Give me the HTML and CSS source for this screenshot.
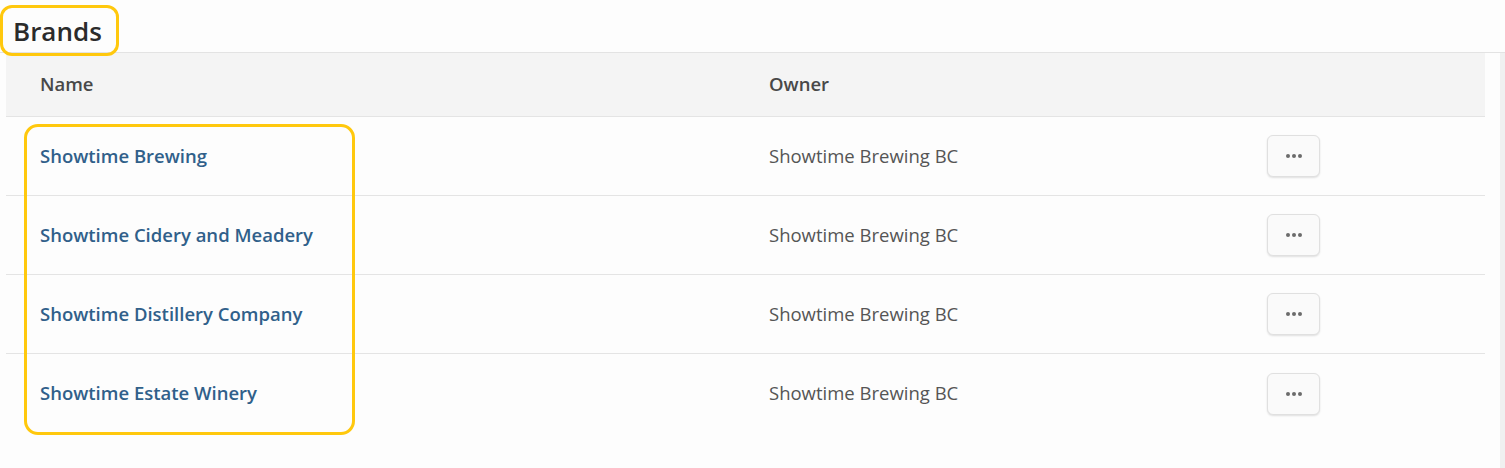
FILE: index.html
```html
<!DOCTYPE html>
<html>
<head>
<meta charset="utf-8">
<link rel="stylesheet" href="styles.css">
</head>
<body>
<div class="page">
  <header class="title-bar">
    <h1 class="title">Brands</h1>
    <span class="mark mark-title"></span>
  </header>
  <div class="content">
    <main class="main">
      <div class="table">
        <div class="row head">
          <div class="cell">Name</div>
          <div class="cell">Owner</div>
          <div class="cell"></div>
        </div>
        <div class="row">
          <div class="cell"><a class="name" href="#">Showtime Brewing</a></div>
          <div class="cell owner">Showtime Brewing BC</div>
          <div class="cell action"><button class="more"><span></span><span></span><span></span></button></div>
        </div>
        <div class="row">
          <div class="cell"><a class="name" href="#">Showtime Cidery and Meadery</a></div>
          <div class="cell owner">Showtime Brewing BC</div>
          <div class="cell action"><button class="more"><span></span><span></span><span></span></button></div>
        </div>
        <div class="row">
          <div class="cell"><a class="name" href="#">Showtime Distillery Company</a></div>
          <div class="cell owner">Showtime Brewing BC</div>
          <div class="cell action"><button class="more"><span></span><span></span><span></span></button></div>
        </div>
        <div class="row last">
          <div class="cell"><a class="name" href="#">Showtime Estate Winery</a></div>
          <div class="cell owner">Showtime Brewing BC</div>
          <div class="cell action"><button class="more"><span></span><span></span><span></span></button></div>
        </div>
        <span class="mark mark-names"></span>
      </div>
    </main>
    <div class="scrollbar"></div>
  </div>
</div>
</body>
</html>
```
FILE: styles.css
```css
* { box-sizing: border-box; }
html, body { margin: 0; height: 100%; }
body {
  background: #fdfdfd;
  font-family: "Open Sans", "Noto Sans", sans-serif;
  color: #444;
}
.page { height: 100%; display: flex; flex-direction: column; }
.title-bar {
  position: relative;
  height: 52px;
  padding-left: 13px;
  display: flex;
  align-items: flex-end;
}
.title {
  margin: 0 0 4px;
  font-size: 26px;
  font-weight: 600;
  color: #2b2b2b;
  line-height: 34px;
}
.mark {
  position: absolute;
  border: 3px solid #ffc80d;
  pointer-events: none;
}
.mark-title { left: 0; top: 5px; width: 119px; height: 51px; border-radius: 12px; z-index: 2; }
.content {
  flex: 1;
  display: flex;
  border-top: 1px solid #e3e3e3;
}
.main { flex: 1; padding-left: 6px; padding-right: 15px; }
.scrollbar { width: 5px; background: #f0f0f0; }
.table { position: relative; }
.row {
  display: grid;
  grid-template-columns: 729px 498px 1fr;
  height: 79px;
  align-items: center;
  border-bottom: 1px solid #e4e4e4;
}
.row.last { border-bottom: none; }
.row.head { height: 64px; background: #f4f4f4; font-weight: 600; color: #484848; }
.cell { padding-left: 34px; padding-bottom: 2px; font-size: 18.5px; }
.cell.action { padding-bottom: 0; }
.name { color: #30608a; font-weight: 600; text-decoration: none; }
.owner { color: #555; }
.more {
  width: 53px; height: 42px;
  border: 1px solid #e0e0e0;
  border-radius: 6px;
  background: #fafafa;
  box-shadow: 0 1px 2px rgba(0,0,0,0.12);
  display: flex; align-items: center; justify-content: center; gap: 2px;
  padding: 0;
}
.more span { width: 4px; height: 4px; border-radius: 50%; background: #6b6b6b; }
.mark-names { left: 18px; top: 71px; width: 331px; height: 311px; border-radius: 14px; }
```
